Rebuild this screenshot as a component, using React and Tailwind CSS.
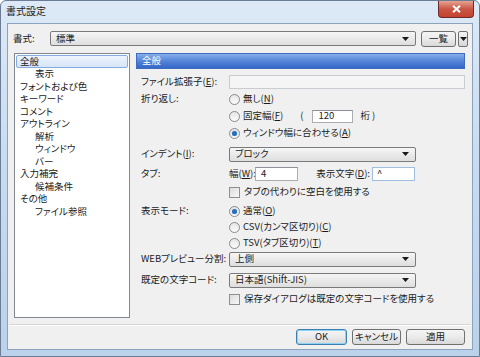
import React from 'react';

const font = "[font-family:'Noto_Sans_CJK_JP','Noto_Sans',sans-serif] [font-feature-settings:'palt']";

const treeItems = [
  { label: '全般', level: 0, selected: true },
  { label: '表示', level: 1 },
  { label: 'フォントおよび色', level: 0 },
  { label: 'キーワード', level: 0 },
  { label: 'コメント', level: 0 },
  { label: 'アウトライン', level: 0 },
  { label: '解析', level: 1 },
  { label: 'ウィンドウ', level: 1 },
  { label: 'バー', level: 1 },
  { label: '入力補完', level: 0 },
  { label: '候補条件', level: 1 },
  { label: 'その他', level: 0 },
  { label: 'ファイル参照', level: 1 },
];

const Arrow = () => (
  <svg width="7" height="4" viewBox="0 0 7 4" className="shrink-0">
    <path d="M0 0h7L3.5 4z" fill="#1a1a1a" />
  </svg>
);

const Mn = ({ pre, k, post = ')' }) => (
  <span>
    {pre}(<span className="underline underline-offset-1">{k}</span>{post}
  </span>
);

const Combo = ({ children, w = 'w-[187px]' }) => (
  <div className={`${w} h-[15px] flex items-center border border-[#7a7a7a] rounded-[2px] bg-gradient-to-b from-[#f6f6f6] to-[#dedede] pl-[5px] pr-[6px]`}>
    <span className="leading-none">{children}</span>
    <span className="ml-auto"><Arrow /></span>
  </div>
);

const Radio = ({ checked, children }) => (
  <div className="flex items-center gap-[3px]">
    <span className="w-[11px] h-[11px] rounded-full border border-[#8a8a8a] bg-gradient-to-b from-[#e6e6e6] to-[#fbfbfb] flex items-center justify-center">
      {checked && <span className="w-[5px] h-[5px] rounded-full bg-[#2a6fb8] shadow-[0_0_1px_#6fb0e8]" />}
    </span>
    <span className="whitespace-nowrap">{children}</span>
  </div>
);

const Check = ({ children }) => (
  <div className="flex items-center gap-[4px]">
    <span className="w-[11px] h-[11px] border border-[#8e8f8f] bg-gradient-to-br from-[#dcdcdc] to-[#f8f8f8]" />
    <span className="whitespace-nowrap">{children}</span>
  </div>
);

const Row = ({ label, mt = '', children }) => (
  <div className={`flex items-center h-[16px] ${mt}`}>
    <div className="w-[93px] pl-[5px] shrink-0 whitespace-nowrap">{label}</div>
    <div className="flex items-center">{children}</div>
  </div>
);

const Button = ({ children, w, focus }) => (
  <div className={`${w} h-[16px] flex items-center justify-center rounded-[3px] border ${focus ? 'border-[#3c7fb1] shadow-[inset_0_0_0_1px_#8fd3f4]' : 'border-[#707070]'} bg-gradient-to-b from-[#f4f4f4] via-[#ebebeb] to-[#d8d8d8]`}>
    {children}
  </div>
);

export default function App() {
  return (
    <div className={`w-[480px] h-[357px] ${font} text-[9.5px] text-[#1a1a1a] leading-none`}>
      <div className="w-full h-full flex flex-col rounded-t-[6px] border border-[#6b7d95] bg-gradient-to-b from-[#dde9f6] via-[#c6daf0] to-[#bcd2ea] overflow-hidden">
        {/* title bar */}
        <div className="h-[22px] flex items-start shrink-0">
          <div className="pl-[5px] pt-[5px] text-[10px] text-[#1b1b1b]">書式設定</div>
          <div className="ml-auto mr-[5px] w-[36px] h-[17px] rounded-b-[4px] border border-t-0 border-[#6e2a2a] bg-gradient-to-b from-[#e6a393] via-[#c95544] to-[#c4422f] flex items-center justify-center">
            <svg width="9" height="8" viewBox="0 0 9 8">
              <path d="M1 0.8L8 7.2M8 0.8L1 7.2" stroke="#fff" strokeWidth="2" />
            </svg>
          </div>
        </div>

        {/* client area */}
        <div className="mx-[6px] mb-[6px] flex-1 flex flex-col bg-[#f0f0f0] border border-[#8da2bd]">
          {/* top row */}
          <div className="flex items-center mt-[6px] h-[17px]">
            <div className="w-[42px] pl-[5px]">書式:</div>
            <Combo w="w-[366px]">標準</Combo>
            <div className="ml-[5px]">
              <Button w="w-[35px]">一覧</Button>
            </div>
            <div className="ml-[2px] w-[10px] h-[16px] flex items-center justify-center rounded-[2px] border border-[#707070] bg-gradient-to-b from-[#f4f4f4] to-[#d8d8d8]">
              <Arrow />
            </div>
          </div>

          {/* main */}
          <div className="flex mt-[6px] pl-[6px] pr-[7px]">
            {/* tree */}
            <div className="w-[116px] h-[265px] bg-white border border-[#828790] pt-[1px] px-[1px]">
              {treeItems.map((it) => (
                <div
                  key={it.label}
                  className={`h-[12.5px] flex items-center overflow-hidden ${it.level ? 'pl-[18px]' : 'pl-[3px]'} ${it.selected ? 'bg-gradient-to-b from-[#eef4fc] to-[#d6e5f7] border border-[#84acdd] rounded-[2px]' : 'border border-transparent'}`}
                >
                  {it.label}
                </div>
              ))}
            </div>

            {/* settings panel */}
            <div className="ml-[6px] flex-1 flex flex-col">
              <div className="h-[16px] flex items-center pl-[5px] text-white bg-gradient-to-b from-[#86aee9] via-[#5585d8] to-[#3567c6] border border-[#3e6cbf]">
                全般
              </div>

              <Row label={<Mn pre="ファイル拡張子" k="E" post="):" />} mt="mt-[5px]">
                <div className="w-[236px] h-[14px] border border-[#c9ccd1] bg-[#f5f5f5]" />
              </Row>
              <Row label="折り返し:" mt="mt-[1px]">
                <Radio><Mn pre="無し" k="N" /></Radio>
              </Row>
              <Row mt="mt-[1px]">
                <Radio><Mn pre="固定幅" k="F" /></Radio>
                <span className="ml-[17px]">(</span>
                <div className="ml-[9px] w-[41px] h-[13px] bg-white border border-[#abadb3] border-t-[#8e9199] flex items-center pl-[5px]">120</div>
                <span className="ml-[7px]">桁 )</span>
              </Row>
              <Row mt="mt-[1px]">
                <Radio checked><Mn pre="ウィンドウ幅に合わせる" k="A" /></Radio>
              </Row>
              <Row label={<Mn pre="インデント" k="I" post="):" />} mt="mt-[5px]">
                <Combo>ブロック</Combo>
              </Row>
              <Row label="タブ:" mt="mt-[4px]">
                <span className="w-[26px] whitespace-nowrap"><Mn pre="幅" k="W" post="):" /></span>
                <div className="w-[43px] h-[14px] bg-white border border-[#abadb3] border-t-[#8e9199] flex items-center pl-[5px]">4</div>
                <span className="w-[74px] text-right pr-[2px] whitespace-nowrap"><Mn pre="表示文字" k="D" post="):" /></span>
                <div className="w-[43px] h-[14px] bg-white border border-[#9fbfe0] flex items-center pl-[4px]">^</div>
              </Row>
              <Row mt="mt-[2px]">
                <Check>タブの代わりに空白を使用する</Check>
              </Row>
              <Row label="表示モード:" mt="mt-[3px]">
                <Radio checked><Mn pre="通常" k="O" /></Radio>
              </Row>
              <Row>
                <Radio>CSV<Mn pre="(カンマ区切り)" k="C" /></Radio>
              </Row>
              <Row>
                <Radio>TSV<Mn pre="(タブ区切り)" k="T" /></Radio>
              </Row>
              <Row label="WEBプレビュー分割:">
                <Combo>上側</Combo>
              </Row>
              <Row label="既定の文字コード:" mt="mt-[5px]">
                <Combo>日本語(Shift-JIS)</Combo>
              </Row>
              <Row mt="mt-[3px]">
                <Check>保存ダイアログは既定の文字コードを使用する</Check>
              </Row>
            </div>
          </div>

          {/* separator */}
          <div className="mt-[6px] mx-[1px] border-t border-[#d5d5d5] border-b border-b-white" />

          {/* buttons */}
          <div className="flex justify-end gap-[5px] pr-[7px] mt-[3px]">
            <Button w="w-[51px]" focus>OK</Button>
            <Button w="w-[49px]">キャンセル</Button>
            <Button w="w-[59px]">適用</Button>
          </div>
        </div>
      </div>
    </div>
  );
}
